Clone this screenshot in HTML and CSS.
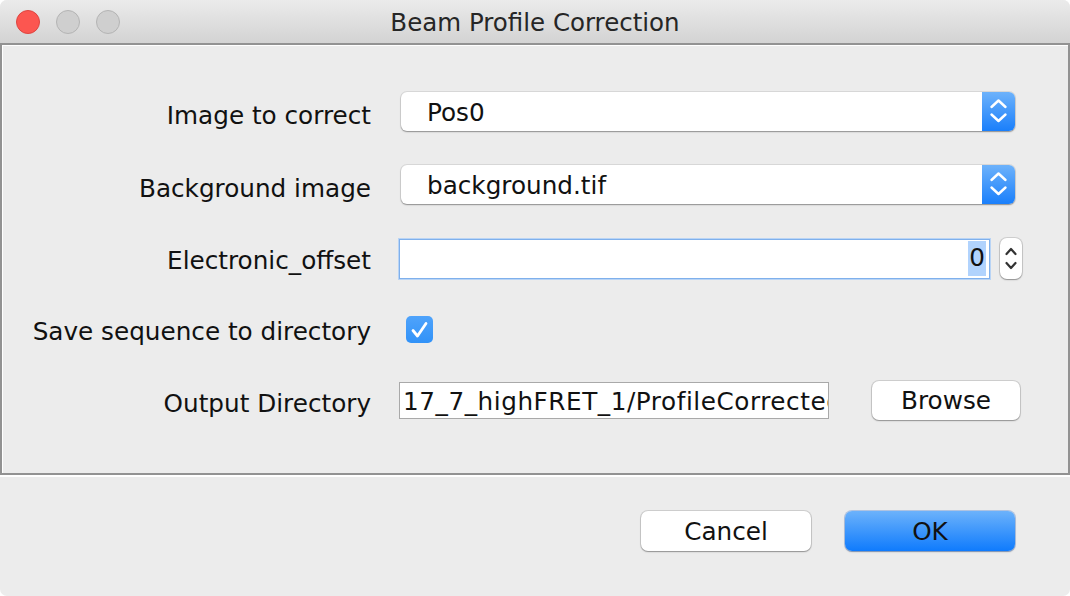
FILE: index.html
```html
<!DOCTYPE html>
<html>
<head>
<meta charset="utf-8">
<title>Beam Profile Correction</title>
<link rel="stylesheet" href="styles.css">
</head>
<body>
<div class="window">
  <div class="titlebar">
    <div class="lights">
      <span class="light close"></span>
      <span class="light"></span>
      <span class="light"></span>
    </div>
    <div class="title">Beam Profile Correction</div>
    <div></div>
  </div>
  <div class="panel">
    <div class="form">
      <div class="lbl">Image to correct</div>
      <div class="combo">
        <span class="combo-text">Pos0</span>
        <span class="combo-arrow">
          <svg width="33" height="39" viewBox="0 0 33 39"><path d="M9.5 15 L16.5 8.5 L23.5 15 M9.5 22.5 L16.5 29 L23.5 22.5" fill="none" stroke="#fff" stroke-width="2.4" stroke-linecap="round" stroke-linejoin="round"/></svg>
        </span>
      </div>

      <div class="lbl">Background image</div>
      <div class="combo">
        <span class="combo-text">background.tif</span>
        <span class="combo-arrow">
          <svg width="33" height="39" viewBox="0 0 33 39"><path d="M9.5 15 L16.5 8.5 L23.5 15 M9.5 22.5 L16.5 29 L23.5 22.5" fill="none" stroke="#fff" stroke-width="2.4" stroke-linecap="round" stroke-linejoin="round"/></svg>
        </span>
      </div>

      <div class="lbl lbl-mid">Electronic_offset</div>
      <div class="spin-row">
        <div class="field focused"><span class="sel">0</span></div>
        <div class="spinner">
          <svg width="22" height="41" viewBox="0 0 22 41"><path d="M6.5 16 L11 11 L15.5 16 M6.5 25 L11 30 L15.5 25" fill="none" stroke="#333" stroke-width="2.2" stroke-linecap="round" stroke-linejoin="round"/></svg>
        </div>
      </div>

      <div class="lbl lbl-mid">Save sequence to directory</div>
      <div class="check-row">
        <span class="checkbox">
          <svg width="27" height="27" viewBox="0 0 27 27"><path d="M7 14.5 L11.5 20 L20 7.5" fill="none" stroke="#fff" stroke-width="2.8" stroke-linecap="round" stroke-linejoin="round"/></svg>
        </span>
      </div>

      <div class="lbl">Output Directory</div>
      <div class="dir-row">
        <div class="field plain"><span class="dir-text">17_7_highFRET_1/ProfileCorrected</span></div>
        <button class="btn browse">Browse</button>
      </div>
    </div>
  </div>
  <div class="footer">
    <button class="btn">Cancel</button>
    <button class="btn primary">OK</button>
  </div>
</div>
</body>
</html>
```

FILE: styles.css
```css
* { box-sizing: border-box; }

html, body {
  margin: 0;
  padding: 0;
  background: #ffffff;
}

body {
  font-family: "DejaVu Sans", "Noto Sans", sans-serif;
  font-size: 24.7px;
  color: #111;
}

.window {
  width: 1070px;
  height: 596px;
  background: #ececec;
  border-radius: 7px;
  overflow: hidden;
  display: flex;
  flex-direction: column;
}

.titlebar {
  height: 43px;
  flex: none;
  background: linear-gradient(#ebebeb, #d3d3d3);
  display: grid;
  grid-template-columns: 1fr auto 1fr;
  align-items: center;
}

.lights {
  display: flex;
  gap: 16px;
  padding-left: 16px;
}

.light {
  width: 24px;
  height: 24px;
  border-radius: 50%;
  background: #cfcfcf;
  border: 1px solid #b4b4b4;
}

.light.close {
  background: #fc5650;
  border-color: #de4540;
}

.title {
  color: #262626;
  font-size: 24.5px;
  line-height: 43px;
  padding-top: 1px;
}

.panel {
  height: 432px;
  flex: none;
  border: 2px solid #929292;
  box-shadow: inset 1px 1px 0 #ffffff, 0 2px 0 #ffffff;
}

.form {
  display: grid;
  grid-template-columns: 369px 623px;
  column-gap: 28px;
  row-gap: 34px;
  padding-top: 47px;
  align-items: center;
}

.lbl {
  text-align: right;
  color: #111;
  white-space: nowrap;
  padding-top: 7px;
}

.lbl-mid {
  padding-top: 4px;
}

.combo {
  margin-left: 2px;
  width: 614px;
  height: 39px;
  background: #fff;
  border-radius: 6px;
  box-shadow: 0 0 0 1px rgba(0, 0, 0, 0.08), 0 1px 1.5px rgba(0, 0, 0, 0.35);
  display: flex;
  align-items: center;
  overflow: hidden;
}

.combo-text {
  flex: 1;
  padding-left: 26px;
  padding-top: 1px;
}

.combo-arrow {
  width: 33px;
  height: 39px;
  background: linear-gradient(#6db2fb, #1a7ffb);
  display: flex;
}

.spin-row {
  display: flex;
  align-items: center;
  gap: 10px;
  height: 41px;
}

.field {
  background: #fff;
  height: 40px;
  display: flex;
  align-items: center;
  overflow: hidden;
  white-space: nowrap;
}

.field.focused {
  width: 591px;
  border: 1px solid #7fb0ec;
  box-shadow: 0 0 0 1px #b9d4f5;
  justify-content: flex-end;
  padding-right: 3px;
}

.sel {
  background: #b1d3fd;
  padding: 2px 1px 3px;
  line-height: 30px;
}

.spinner {
  width: 22px;
  height: 41px;
  background: #fff;
  border-radius: 7px;
  box-shadow: 0 0 0 1px rgba(0, 0, 0, 0.12), 0 1px 1.5px rgba(0, 0, 0, 0.3);
  display: flex;
}

.check-row {
  height: 33px;
  display: flex;
  align-items: center;
}

.checkbox {
  margin-left: 7px;
  width: 27px;
  height: 27px;
  border-radius: 5px;
  background: linear-gradient(#4fa3fb, #3192f8);
  display: flex;
}

.dir-row {
  display: flex;
  align-items: center;
  gap: 43px;
  height: 40px;
}

.field.plain {
  width: 430px;
  height: 37px;
  border: 1px solid #a9a9a9;
  padding-left: 3px;
  margin-top: 1px;
}

.dir-text {
  padding-top: 2px;
  letter-spacing: 0.55px;
}

.btn {
  font-family: "DejaVu Sans", "Noto Sans", sans-serif;
  font-size: 24.7px;
  color: #111;
  background: #fff;
  border: none;
  border-radius: 7px;
  box-shadow: 0 0 0 1px rgba(0, 0, 0, 0.12), 0 1px 1.5px rgba(0, 0, 0, 0.3);
  width: 170px;
  height: 40px;
  padding: 0;
  padding-top: 1px;
}

.btn.browse {
  width: 148px;
  height: 39px;
}

.btn.primary {
  background: linear-gradient(#6cb2fb, #0f7bfd);
  box-shadow: 0 0 0 1px rgba(0, 80, 200, 0.25), 0 1px 1.5px rgba(0, 0, 0, 0.3);
}

.footer {
  flex: 1;
  display: flex;
  justify-content: flex-end;
  align-items: flex-start;
  gap: 34px;
  padding-top: 36px;
  padding-right: 55px;
}
```
